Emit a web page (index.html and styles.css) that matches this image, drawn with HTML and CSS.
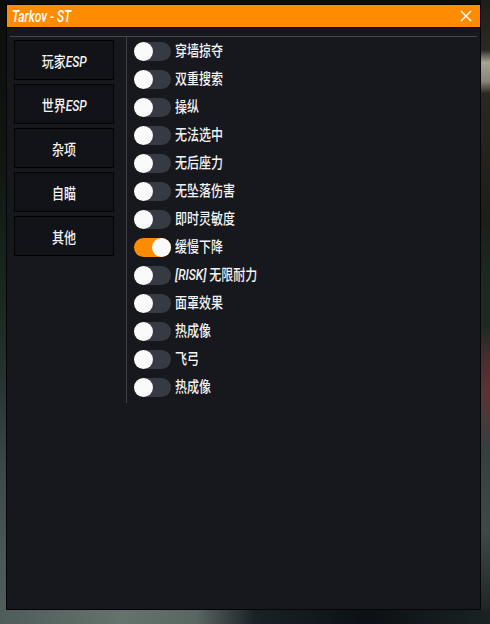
FILE: index.html
```html
<!DOCTYPE html>
<html lang="zh">
<head>
<meta charset="utf-8">
<title>Tarkov - ST</title>
<link rel="stylesheet" href="styles.css">
</head>
<body>
<div class="window">
  <div class="titlebar">
    <span class="title">Tarkov - ST</span>
    <svg class="close" width="12" height="12" viewBox="0 0 12 12"><path d="M1 1 L11 11 M11 1 L1 11" stroke="#fff" stroke-width="1.5" fill="none"/></svg>
  </div>
  <div class="content">
    <div class="sep"></div>
    <div class="main">
      <div class="nav">
        <div class="btn"><span class="txt">玩家<span class="lat">ESP</span></span></div>
        <div class="btn"><span class="txt">世界<span class="lat">ESP</span></span></div>
        <div class="btn"><span class="txt">杂项</span></div>
        <div class="btn"><span class="txt">自瞄</span></div>
        <div class="btn"><span class="txt">其他</span></div>
      </div>
      <div class="list">
        <div class="row"><span class="tog"><span class="knob"></span></span><span class="label">穿墙掠夺</span></div>
        <div class="row"><span class="tog"><span class="knob"></span></span><span class="label">双重搜索</span></div>
        <div class="row"><span class="tog"><span class="knob"></span></span><span class="label">操纵</span></div>
        <div class="row"><span class="tog"><span class="knob"></span></span><span class="label">无法选中</span></div>
        <div class="row"><span class="tog"><span class="knob"></span></span><span class="label">无后座力</span></div>
        <div class="row"><span class="tog"><span class="knob"></span></span><span class="label">无坠落伤害</span></div>
        <div class="row"><span class="tog"><span class="knob"></span></span><span class="label">即时灵敏度</span></div>
        <div class="row"><span class="tog on"><span class="knob"></span></span><span class="label">缓慢下降</span></div>
        <div class="row"><span class="tog"><span class="knob"></span></span><span class="label"><span class="lat">[RISK]</span> 无限耐力</span></div>
        <div class="row"><span class="tog"><span class="knob"></span></span><span class="label">面罩效果</span></div>
        <div class="row"><span class="tog"><span class="knob"></span></span><span class="label">热成像</span></div>
        <div class="row"><span class="tog"><span class="knob"></span></span><span class="label">飞弓</span></div>
        <div class="row"><span class="tog"><span class="knob"></span></span><span class="label">热成像</span></div>
      </div>
    </div>
  </div>
</div>
</body>
</html>
```
FILE: styles.css
```css
html, body {
  margin: 0;
  padding: 0;
}
body {
  width: 490px;
  height: 624px;
  overflow: hidden;
  font-family: Roboto, "Noto Sans CJK SC", sans-serif;
  color: #f4f4f4;
  background:
    linear-gradient(to right, #4e5c5a 0%, #66726c 25%, #5a6662 40%, #1a2226 52%, #0c1014 75%, #1a2224 100%) left bottom / 100% 14px no-repeat,
    linear-gradient(to bottom, #1e1d17 0%, #2b2a22 8%, #a9a392 10%, #8a8576 13%, #2a2820 15%, #1c1e18 35%, #1a2a22 45%, #1c2a24 52%, #4a2e2e 58%, #5a3434 63%, #33403e 72%, #3c4a48 85%, #1a2020 100%) right top / 9px 100% no-repeat,
    linear-gradient(to bottom, #0c0e0c 0%, #101610 25%, #18261e 45%, #26322e 60%, #3c4846 75%, #4a5858 90%, #505e5c 100%);
}
.window {
  margin: 4px 0 0 6px;
  width: 473px;
  height: 604px;
  border: 1px solid #050507;
  background: #17181e;
  display: flex;
  flex-direction: column;
}
.titlebar {
  height: 22px;
  background: #ff8c00;
  border-bottom: 1px solid #000;
  display: flex;
  align-items: center;
  justify-content: space-between;
  padding: 0 8px 0 5px;
}
.title {
  display: inline-block;
  font-style: italic;
  font-size: 16px;
  font-weight: 500;
  color: #fff;
  transform: scaleX(0.75);
  transform-origin: left center;
  white-space: nowrap;
}
.close {
  display: block;
}
.content {
  padding: 8px 3px 0;
}
.sep {
  height: 1px;
  background: #43464e;
}
.main {
  display: flex;
  padding-left: 4px;
}
.nav {
  width: 100px;
  display: flex;
  flex-direction: column;
  gap: 4px;
  padding-top: 3px;
}
.btn {
  height: 40px;
  box-sizing: border-box;
  border: 1px solid #030304;
  background: #121318;
  display: flex;
  align-items: center;
  justify-content: center;
}
.txt {
  display: inline-block;
  font-size: 15px;
  font-weight: 500;
  transform: scaleX(0.8);
  transform-origin: center;
  white-space: nowrap;
}
.lat {
  font-style: italic;
}
.list {
  margin-left: 12px;
  border-left: 1px solid #3c3f47;
  padding: 5px 0 6px 7px;
  display: flex;
  flex-direction: column;
  gap: 9px;
}
.row {
  display: flex;
  align-items: center;
  height: 19px;
  gap: 4px;
}
.tog {
  width: 37px;
  height: 19px;
  border-radius: 10px;
  background: #363a42;
  display: flex;
  justify-content: flex-start;
  flex-shrink: 0;
}
.tog.on {
  background: #ff8c00;
  justify-content: flex-end;
}
.knob {
  width: 19px;
  height: 19px;
  border-radius: 50%;
  background: #fafafa;
}
.label {
  display: inline-block;
  font-size: 15px;
  font-weight: 500;
  transform: scaleX(0.8);
  transform-origin: left center;
  white-space: nowrap;
  line-height: 19px;
}
```
